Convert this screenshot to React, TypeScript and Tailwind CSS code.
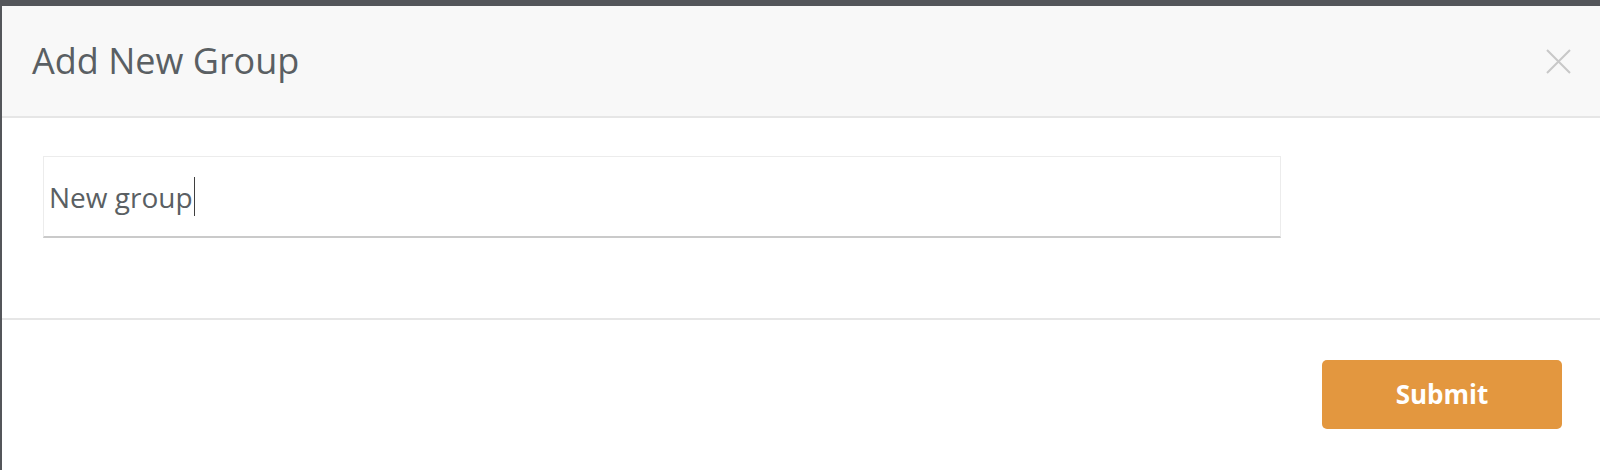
import React, { useState } from 'react';

export default function App() {
  const [name, setName] = useState('New group');

  return (
    <div className="h-[470px] w-full bg-[#54565a] pt-[6px] pl-[2px] overflow-hidden font-['Open_Sans',sans-serif]">
      <div className="h-full bg-white flex flex-col">
        {/* Header */}
        <div className="h-[112px] bg-[#f8f8f8] border-b-2 border-[#e6e6e6] flex items-center justify-between pl-[30px] pr-[29px] shrink-0">
          <h2 className="text-[36px] text-[#5a5f63] font-normal">Add New Group</h2>
          <button className="text-[#c8c8c8]">
            <svg width="25" height="25" viewBox="0 0 25 25" fill="none" stroke="currentColor" strokeWidth="2">
              <path d="M1 1L24 24M24 1L1 24" />
            </svg>
          </button>
        </div>

        {/* Body */}
        <div className="pt-[38px] pb-[80px] pl-[41px] border-b-2 border-[#e6e6e6] shrink-0">
          <div className="w-[1238px] h-[82px] border border-[#ececec] border-b-2 border-b-[#cacaca] flex items-center pl-[5px]">
            <span className="text-[28px] text-[#5a5f63]">{name}</span>
            <span className="w-[1.5px] h-[39px] bg-[#3f3f3f] ml-[1px]" />
          </div>
        </div>

        {/* Footer */}
        <div className="flex justify-end pt-[40px] pr-[38px]">
          <button
            onClick={() => setName(name)}
            className="w-[240px] h-[69px] bg-[#e3973f] rounded-[5px] text-white font-bold text-[26px]"
          >
            Submit
          </button>
        </div>
      </div>
    </div>
  );
}
